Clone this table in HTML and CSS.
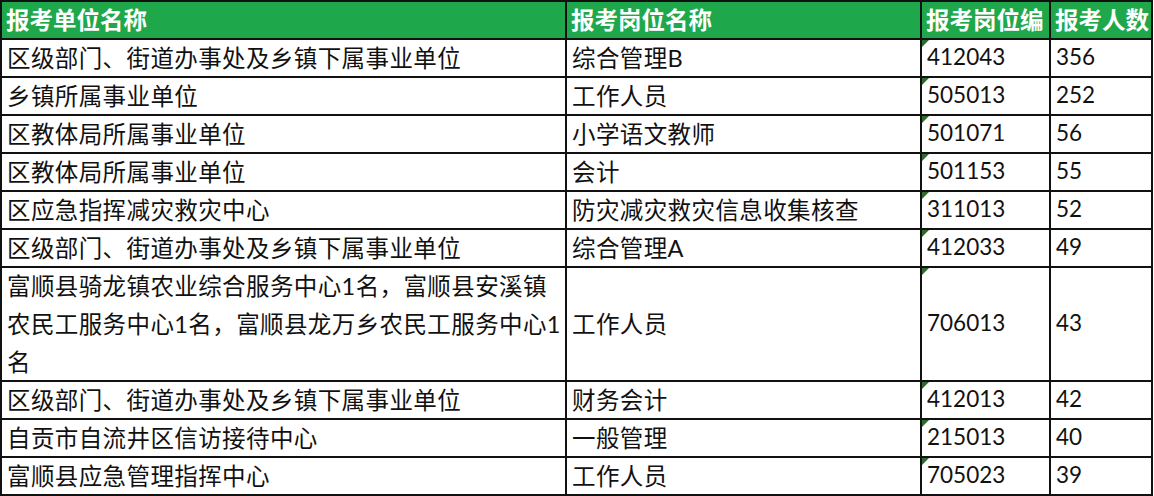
FILE: index.html
```html
<!DOCTYPE html>
<html lang="zh-CN">
<head>
<meta charset="utf-8">
<link rel="stylesheet" href="styles.css">
</head>
<body>
<div class="sheet">
  <div class="cell head">报考单位名称</div>
  <div class="cell head">报考岗位名称</div>
  <div class="cell head">报考岗位编</div>
  <div class="cell head">报考人数</div>

  <div class="cell">区级部门、街道办事处及乡镇下属事业单位</div>
  <div class="cell">综合管理B</div>
  <div class="cell code">412043</div>
  <div class="cell num">356</div>

  <div class="cell">乡镇所属事业单位</div>
  <div class="cell">工作人员</div>
  <div class="cell code">505013</div>
  <div class="cell num">252</div>

  <div class="cell">区教体局所属事业单位</div>
  <div class="cell">小学语文教师</div>
  <div class="cell code">501071</div>
  <div class="cell num">56</div>

  <div class="cell">区教体局所属事业单位</div>
  <div class="cell">会计</div>
  <div class="cell code">501153</div>
  <div class="cell num">55</div>

  <div class="cell">区应急指挥减灾救灾中心</div>
  <div class="cell">防灾减灾救灾信息收集核查</div>
  <div class="cell code">311013</div>
  <div class="cell num">52</div>

  <div class="cell">区级部门、街道办事处及乡镇下属事业单位</div>
  <div class="cell">综合管理A</div>
  <div class="cell code">412033</div>
  <div class="cell num">49</div>

  <div class="cell tall"><span>富顺县骑龙镇农业综合服务中心1名，富顺县安溪镇<br>农民工服务中心1名，富顺县龙万乡农民工服务中心1<br>名</span></div>
  <div class="cell">工作人员</div>
  <div class="cell code">706013</div>
  <div class="cell num">43</div>

  <div class="cell">区级部门、街道办事处及乡镇下属事业单位</div>
  <div class="cell">财务会计</div>
  <div class="cell code">412013</div>
  <div class="cell num">42</div>

  <div class="cell">自贡市自流井区信访接待中心</div>
  <div class="cell">一般管理</div>
  <div class="cell code">215013</div>
  <div class="cell num">40</div>

  <div class="cell">富顺县应急管理指挥中心</div>
  <div class="cell">工作人员</div>
  <div class="cell code">705023</div>
  <div class="cell num">39</div>
</div>
</body>
</html>
```

FILE: styles.css
```css
html, body {
  margin: 0;
  padding: 0;
  background: #ffffff;
}

.sheet {
  display: grid;
  grid-template-columns: 563px 353px 127px 100px;
  grid-template-rows: repeat(7, 36px) 112px repeat(3, 36px);
  gap: 2px;
  padding: 2px;
  width: max-content;
  background: #111111;
  font-family: "Lato", "Noto Sans CJK SC", sans-serif;
  font-size: 23.5px;
  letter-spacing: 0.4px;
  color: #111111;
}

.cell {
  background: #ffffff;
  display: flex;
  align-items: center;
  padding: 0 0 3px 5px;
  overflow: hidden;
  white-space: nowrap;
  position: relative;
}

.head {
  background: #1fa84b;
  color: #ffffff;
  font-weight: 700;
  font-family: "Noto Sans CJK SC", sans-serif;
  font-size: 23.5px;
  letter-spacing: 0;
  padding-left: 4px;
}

.tall {
  line-height: 38px;
  white-space: normal;
  padding-bottom: 0;
}

.code,
.num {
  font-size: 22.5px;
  letter-spacing: 0;
}

.code::before {
  content: "";
  position: absolute;
  left: 0;
  top: 0;
  width: 0;
  height: 0;
  border-top: 7px solid #2f6b2c;
  border-right: 7px solid transparent;
}
```
